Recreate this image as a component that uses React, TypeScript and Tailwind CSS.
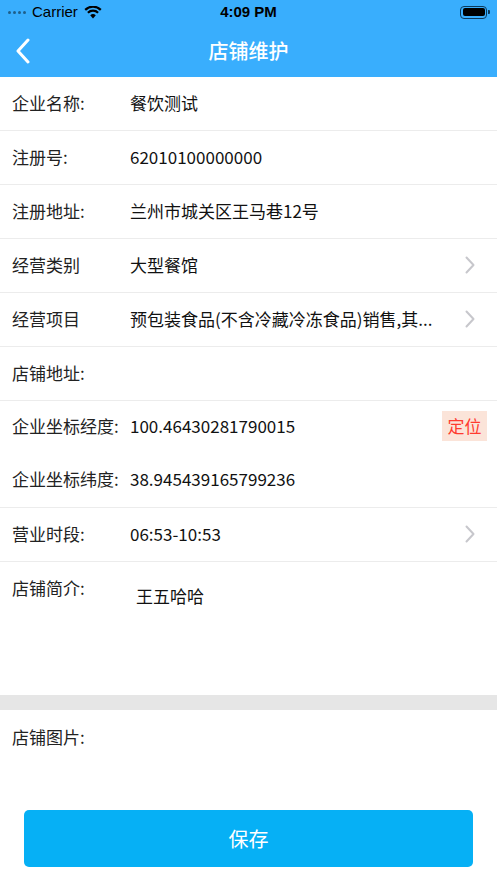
import React from "react";

const font = { fontFamily: '"Noto Sans CJK SC", "Liberation Sans", sans-serif' };

function Chevron() {
  return (
    <svg width="10" height="18" viewBox="0 0 10 18" className="shrink-0">
      <path d="M1.5 1.5 L8.5 9 L1.5 16.5" fill="none" stroke="#c7c7cc" strokeWidth="2" strokeLinecap="round" strokeLinejoin="round" />
    </svg>
  );
}

function Row({ label, value, chevron }: { label: string; value?: string; chevron?: boolean }) {
  return (
    <div className="h-[54px] flex items-center pl-[12px] pr-[22px] pb-[2px] border-b border-[#ececec]">
      <div className="w-[118px] shrink-0 text-[17px] text-[#222]">{label}</div>
      <div className="flex-1 min-w-0 whitespace-nowrap text-[17px] text-[#111]">{value}</div>
      {chevron && <Chevron />}
    </div>
  );
}

export default function App() {
  return (
    <div className="w-[497px] h-[883px] bg-white flex flex-col" style={font}>
      <div className="bg-[#39aefd] h-[77px] flex flex-col shrink-0">
        <div className="h-[24px] flex items-center px-[6px] text-black relative">
          <div className="flex items-center gap-[2px] ml-[2px]">
            <span className="w-[3px] h-[3px] rounded-full bg-[#1f5f8a]" />
            <span className="w-[3px] h-[3px] rounded-full bg-[#1f5f8a]" />
            <span className="w-[3px] h-[3px] rounded-full bg-[#1f5f8a]" />
            <span className="w-[3px] h-[3px] rounded-full bg-[#1f5f8a]" />
          </div>
          <span className="ml-[6px] text-[15px] font-medium" style={{ fontFamily: '"Liberation Sans", sans-serif' }}>Carrier</span>
          <svg width="18" height="13" viewBox="0 0 18 13" className="ml-[6px]">
            <path d="M9 12.5 L6.2 9.3 A4 4 0 0 1 11.8 9.3 Z" fill="#000" />
            <path d="M3.9 6.8 A7.3 7.3 0 0 1 14.1 6.8" fill="none" stroke="#000" strokeWidth="2.2" />
            <path d="M1.2 3.9 A11 11 0 0 1 16.8 3.9" fill="none" stroke="#000" strokeWidth="2.2" />
          </svg>
          <span className="absolute left-0 right-0 text-center text-[15px] font-semibold" style={{ fontFamily: '"Liberation Sans", sans-serif' }}>4:09 PM</span>
          <div className="ml-auto mr-[1px] flex items-center">
            <div className="w-[27px] h-[13px] rounded-[4px] border border-[#0a3a5c] p-[1.5px]">
              <div className="w-full h-full rounded-[2px] bg-black" />
            </div>
            <div className="w-[2px] h-[4px] bg-[#0a3a5c] rounded-r-[1px] ml-[1px]" />
          </div>
        </div>
        <div className="flex-1 flex items-center relative">
          <svg width="16" height="26" viewBox="0 0 16 26" className="ml-[15px]">
            <path d="M13 2 L3 13 L13 24" fill="none" stroke="#fff" strokeWidth="3" strokeLinecap="round" strokeLinejoin="round" />
          </svg>
          <span className="absolute left-0 right-0 text-center text-white text-[20px] font-medium">店铺维护</span>
        </div>
      </div>

      <Row label="企业名称:" value="餐饮测试" />
      <Row label="注册号:" value="62010100000000" />
      <Row label="注册地址:" value="兰州市城关区王马巷12号" />
      <Row label="经营类别" value="大型餐馆" chevron />
      <Row label="经营项目" value="预包装食品(不含冷藏冷冻食品)销售,其..." chevron />
      <Row label="店铺地址:" value="" />

      <div className="h-[107px] shrink-0 flex flex-col border-b border-[#ececec]">
        <div className="h-[53px] flex items-center pl-[12px] pr-[10px] pb-[3px]">
          <div className="w-[118px] shrink-0 text-[17px] text-[#222]">企业坐标经度:</div>
          <div className="flex-1 text-[17px] text-[#111]">100.46430281790015</div>
          <div className="bg-[#fbe4d9] text-[#ff3b30] text-[17px] w-[45px] h-[30px] flex items-center justify-center">定位</div>
        </div>
        <div className="h-[53px] flex items-center pl-[12px] pb-[3px]">
          <div className="w-[118px] shrink-0 text-[17px] text-[#222]">企业坐标纬度:</div>
          <div className="flex-1 text-[17px] text-[#111]">38.945439165799236</div>
        </div>
      </div>

      <Row label="营业时段:" value="06:53-10:53" chevron />

      <div className="h-[133px] shrink-0 flex pl-[12px] pt-[13px]">
        <div className="w-[124px] shrink-0 text-[17px] text-[#222]">店铺简介:</div>
        <div className="pt-[8px] text-[17px] text-[#111]">王五哈哈</div>
      </div>

      <div className="h-[15px] shrink-0 bg-[#e6e6e6]" />

      <div className="h-[100px] shrink-0 pl-[12px] pt-[14px] text-[17px] text-[#222]">店铺图片:</div>

      <div className="px-[24px]">
        <button className="w-full h-[57px] rounded-[5px] bg-[#06b0f5] text-white text-[20px]">保存</button>
      </div>
    </div>
  );
}
